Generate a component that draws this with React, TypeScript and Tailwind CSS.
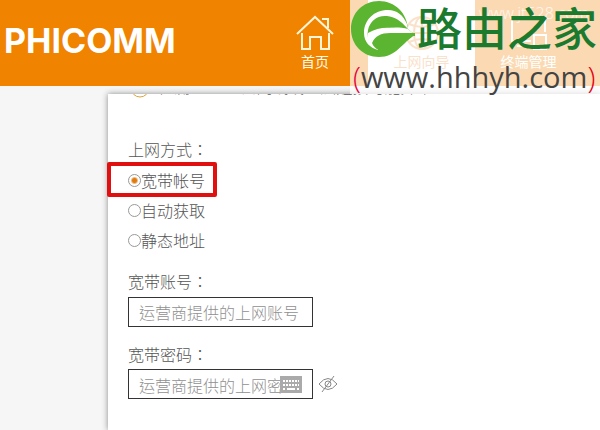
import React, { useState } from 'react';

const modes = [
  { id: 'pppoe', label: '宽带帐号' },
  { id: 'dhcp', label: '自动获取' },
  { id: 'static', label: '静态地址' },
];

function HomeIcon() {
  return (
    <svg width="40" height="36" viewBox="0 0 40 36" fill="none" stroke="#fff6d8" strokeWidth="2">
      <path d="M2 19 20 2l18 17" />
      <path d="M7 18v16h8V22h11v12h8V18" />
      <path d="M27 4h6v9" />
    </svg>
  );
}

function GlobeIcon() {
  return (
    <svg width="40" height="36" viewBox="0 0 40 36" fill="none" stroke="#ee9a50" strokeWidth="2">
      <circle cx="20" cy="18" r="16" />
      <ellipse cx="20" cy="18" rx="8" ry="16" />
      <path d="M4 18h32M20 2v32M7 9q13 6 26 0M7 27q13-6 26 0" />
    </svg>
  );
}

function DevicesIcon() {
  return (
    <svg width="40" height="36" viewBox="0 0 40 36" fill="none" stroke="#ffffff" strokeWidth="2">
      <path d="M22 26H3V3h33v14M8 31h14M13 26v5" />
      <rect x="25" y="20" width="12" height="14" />
      <path d="M29 31h4" />
    </svg>
  );
}

function Watermark() {
  return (
    <div className="absolute top-0 right-0 w-[250px] h-[94px] bg-white/70 font-['Open_Sans','Noto_Sans_CJK_SC',sans-serif]">
      <span className="absolute top-0 left-[129px] text-base leading-[26px] text-white/80">www.jt528.com</span>
      <svg className="absolute top-0 left-0" width="66" height="58" viewBox="0 0 66 58">
        <path
          fill="#5cb531"
          d="M58 29C57 13 45 1 29 1 13 1 1 13 1 29s12 28 28 28c17 0 23-14 36-22Z"
        />
        <path
          fill="#ffffff"
          d="M57 24C53 15 47 10 38 10 24 10 14 20 14 33c0 9 6 15 14 17-2-9 4-15 14-15h23l-7-6Z"
        />
        <path fill="#5cb531" d="M18 30C20 21 27 15 37 16c8 1 13 4 21 13-18-4-31 0-38 14-2-4-3-8-2-13Z" />
        <path fill="#ffffff" d="M18 33c8-5 16-6 26-5l14 1-13 2c-11 0-21 4-25 13-2-3-3-7-2-11Z" />
        <path fill="#5cb531" d="M22 43c3-7 9-10 18-10h25v3H44c-9 1-15 6-15 14-3-1-6-4-7-7Z" />
      </svg>
      <span className="absolute top-0 left-[67px] text-[45px] leading-[58px] font-medium text-[#1b7a2e] whitespace-nowrap">
        路由之家
      </span>
      <span className="absolute top-[58px] left-[3px] text-[29px] leading-[38px] font-medium text-[#444444] whitespace-nowrap">
        <span className="font-light text-[#e6003c]">(</span>www.hhhyh.com<span className="font-light text-[#e60012]">)</span>
      </span>
    </div>
  );
}

function App() {
  const [mode, setMode] = useState('pppoe');
  const [showPassword, setShowPassword] = useState(false);

  return (
    <div className="relative min-h-screen flex flex-col bg-[#f6f6f6] text-base text-[#555555] font-['Noto_Sans_CJK_TC',sans-serif] font-light overflow-hidden">
      <header className="h-[86px] flex justify-between bg-[#f08300] text-[#fffbe6]">
        <h1 className="pl-1 pt-[21px] font-['Inter',sans-serif] text-[34px] leading-[40px] font-bold text-white">PHICOMM</h1>
        <nav className="flex text-sm leading-5 font-normal">
          <a href="#home" className="w-[106px] pt-[15px] flex flex-col items-center">
            <HomeIcon />
            首页
          </a>
          <a href="#guide" className="w-[107px] pt-[15px] flex flex-col items-center bg-white text-[#ee9a50]">
            <GlobeIcon />
            上网向导
          </a>
          <a href="#devices" className="w-[125px] pr-[18px] pt-[15px] flex flex-col items-center text-white">
            <DevicesIcon />
            终端管理
          </a>
        </nav>
      </header>

      <main className="grow ml-[108px] mt-2 pl-5 bg-white shadow-[0_0_6px_#888888]">
        <div className="h-[5px] flex items-end overflow-hidden whitespace-nowrap">
          <svg className="shrink-0 mr-2" width="22" height="22" viewBox="0 0 22 22" fill="none" stroke="#d9a441">
            <circle cx="12" cy="11" r="9" />
            <path d="M12 5v7" />
          </svg>
          <p className="pb-1 leading-[18px]">检测到WAN口网线或上层连接可能异常</p>
        </div>

        <form>
          <fieldset>
            <legend className="pt-[38px] pb-1 leading-[24px]">上网方式：</legend>
            {modes.map((m) => (
              <label key={m.id} className="relative flex items-center h-[30px] w-fit leading-[24px]">
                <input
                  type="radio"
                  name="mode"
                  checked={mode === m.id}
                  onChange={() => setMode(m.id)}
                  className="appearance-none size-[13px] rounded-full border border-[#999999] bg-white checked:bg-[radial-gradient(circle,#e07b10_2px,transparent_4px)]"
                />
                {m.label}
                {m.id === 'pppoe' && (
                  <span className="absolute -left-[21px] -top-[3px] w-[110px] h-[35px] border-4 border-[#e01010] rounded-xs pointer-events-none" />
                )}
              </label>
            ))}
          </fieldset>

          <label htmlFor="account" className="block mt-[14px] leading-[24px]">宽带账号：</label>
          <input
            id="account"
            type="text"
            placeholder="运营商提供的上网账号"
            className="block mt-1 w-[185px] h-[30px] px-[10px] border border-[#333333] placeholder:text-[#909090]"
          />

          <label htmlFor="password" className="block mt-[15px] leading-[24px]">宽带密码：</label>
          <div className="flex items-center mt-[3px]">
            <div className="relative">
              <input
                id="password"
                type={showPassword ? 'text' : 'password'}
                placeholder="运营商提供的上网密码"
                className="block w-[185px] h-[30px] pt-[2px] pl-[10px] pr-[31px] border border-[#333333] placeholder:text-[#909090]"
              />
              <svg className="absolute right-[11px] top-[7px]" width="22" height="17" viewBox="0 0 22 17">
                <path fill="#aaaaaa" d="M0 0h22v17H0Z" />
                <path stroke="#ffffff" strokeWidth="2" strokeDasharray="2 1" d="M3 5h16M3 9h16" />
                <path stroke="#ffffff" strokeWidth="2" d="M3 13h2M7 13h8M17 13h2" />
              </svg>
            </div>
            <button type="button" aria-label="显示密码" onClick={() => setShowPassword(!showPassword)} className="ml-[5px]">
              <svg width="20" height="18" viewBox="0 0 20 18" fill="none" stroke="#888888">
                <path d="M1 9q9-11 18 0-9 11-18 0Z" />
                <circle cx="10" cy="9" r="3" />
                <path d="M16 1 4 17" />
              </svg>
            </button>
          </div>
        </form>
      </main>

      <Watermark />
    </div>
  );
}

export default App;
